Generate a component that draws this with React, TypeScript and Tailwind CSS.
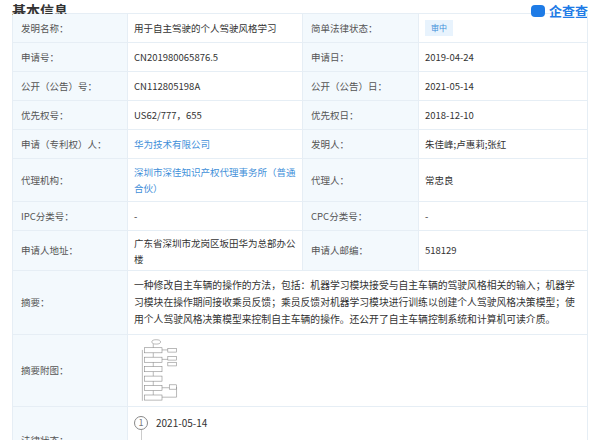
const rows: [string, React.ReactNode, string, React.ReactNode][] = [
  ["发明名称：", "用于自主驾驶的个人驾驶风格学习", "简单法律状态：", <span className="bg-[#e8f3fd] px-1.5 py-0.5 text-[8px] text-[#3f8fd9]">审中</span>],
  ["申请号：", "CN201980065876.5", "申请日：", "2019-04-24"],
  ["公开（公告）号：", "CN112805198A", "公开（公告）日：", "2021-05-14"],
  ["优先权号：", "US62/777，655", "优先权日：", "2018-12-10"],
  ["申请（专利权）人：", <span className="text-[#3f8fd9]">华为技术有限公司</span>, "发明人：", "朱佳峰;卢惠莉;张红"],
  ["代理机构：", <span className="text-[#3f8fd9]">深圳市深佳知识产权代理事务所（普通合伙）</span>, "代理人：", "常忠良"],
  ["IPC分类号：", "-", "CPC分类号：", "-"],
  ["申请人地址：", "广东省深圳市龙岗区坂田华为总部办公楼", "申请人邮编：", "518129"],
]
const heights = ["h-[29px]", "h-[29px]", "h-[29px]", "h-[29px]", "h-[29px]", "h-[43px]", "h-[29px]", "h-[40px]"]

function Flow() {
  return (
    <svg width="48" height="64" viewBox="0 0 60 88" fill="none" stroke="#888" strokeWidth="0.8">
      <ellipse cx="22" cy="4" rx="6" ry="3" />
      <rect x="6" y="12" width="24" height="7" />
      <rect x="6" y="25" width="24" height="7" />
      <rect x="6" y="38" width="24" height="7" />
      <rect x="6" y="51" width="24" height="7" />
      <rect x="6" y="64" width="24" height="7" />
      <rect x="6" y="77" width="24" height="7" />
      <rect x="38" y="13" width="12" height="5" />
      <rect x="38" y="24" width="12" height="5" />
      <rect x="38" y="32" width="12" height="5" />
      <rect x="40" y="63" width="10" height="6" />
      <path d="M18 7v5M18 19v6M18 32v6M18 45v6M18 58v6M18 71v6M30 15h8M30 28h8M30 67h10M50 66v14H30M3 15v70" />
    </svg>
  )
}

export default function App() {
  return (
    <div className="h-[440px] w-[600px] overflow-hidden bg-white text-[9.5px] text-[#333]" style={{ fontFamily: '"Noto Sans CJK SC", "Liberation Sans", sans-serif' }}>
      <div className="flex h-[13px] items-end justify-between px-3">
        <span className="-mb-1 text-[14px] font-bold leading-none text-[#333]">基本信息</span>
        <div className="-mb-1 flex items-center gap-1">
          <span className="h-[12px] w-[14px] rounded-sm bg-[#1e7be6]" />
          <span className="text-[13px] font-bold leading-none text-[#1e7be6]">企查查</span>
        </div>
      </div>
      <div className="mx-3 border-l border-t border-[#e6eef5]">
        {rows.map((r, i) => (
          <div key={i} className={`grid grid-cols-[115px_175px_116px_1fr] border-b border-[#e6eef5] ${heights[i]}`}>
            <div className="flex items-center border-r border-[#e6eef5] bg-[#f3f9fd] px-2 text-[#555]">{r[0]}</div>
            <div className="flex items-center border-r border-[#e6eef5] px-[6px] leading-[16px]">{r[1]}</div>
            <div className="flex items-center border-r border-[#e6eef5] bg-[#f3f9fd] px-2 text-[#555]">{r[2]}</div>
            <div className="flex items-center border-r border-[#e6eef5] px-[6px]">{r[3]}</div>
          </div>
        ))}
        <div className="grid h-[64px] grid-cols-[115px_1fr] border-b border-[#e6eef5]">
          <div className="flex items-center border-r border-[#e6eef5] bg-[#f3f9fd] px-2 text-[#555]">摘要：</div>
          <div className="flex items-center border-r border-[#e6eef5] px-[6px] text-[9.8px] leading-[17px]">
            一种修改自主车辆的操作的方法，包括：机器学习模块接受与自主车辆的驾驶风格相关的输入；机器学习模块在操作期间接收乘员反馈；乘员反馈对机器学习模块进行训练以创建个人驾驶风格决策模型；使用个人驾驶风格决策模型来控制自主车辆的操作。还公开了自主车辆控制系统和计算机可读介质。
          </div>
        </div>
        <div className="grid h-[72px] grid-cols-[115px_1fr] border-b border-[#e6eef5]">
          <div className="flex items-center border-r border-[#e6eef5] bg-[#f3f9fd] px-2 text-[#555]">摘要附图：</div>
          <div className="flex items-center border-r border-[#e6eef5] px-[10px]"><Flow /></div>
        </div>
        <div className="grid h-[60px] grid-cols-[115px_1fr]">
          <div className="flex items-start border-r border-[#e6eef5] bg-[#f3f9fd] px-2 pt-[26px] text-[#555]">法律状态：</div>
          <div className="border-r border-[#e6eef5] px-[6px] pt-2">
            <div className="flex items-center gap-2">
              <span className="flex h-[14px] w-[14px] items-center justify-center rounded-full border border-[#888] text-[9px] text-[#777]">1</span>
              <span className="text-[10px]">2021-05-14</span>
            </div>
            <div className="ml-[7px] h-8 w-px bg-[#ccc]" />
          </div>
        </div>
      </div>
    </div>
  )
}
